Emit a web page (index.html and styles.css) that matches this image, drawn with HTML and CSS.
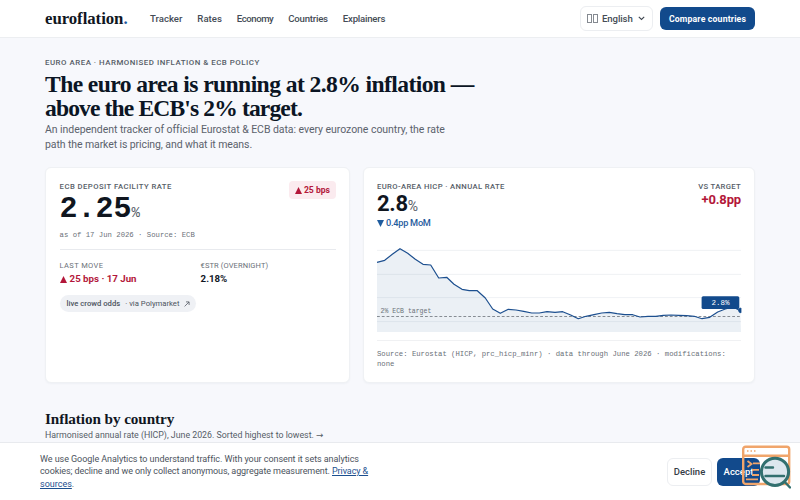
FILE: index.html
```
<!DOCTYPE html>
<html lang="en">
<head>
    <meta charset="UTF-8">
    <meta name="viewport" content="width=device-width, initial-scale=1.0">
    <title>euroflation.</title>
    <link rel="stylesheet" href="styles.css">
</head>
<body>

<header class="topbar">
    <a class="logo">euroflation<span>.</span></a>
    <nav class="nav">
        <a class="n1">Tracker</a>
        <a class="n2">Rates</a>
        <a class="n3">Economy</a>
        <a class="n4">Countries</a>
        <a class="n5">Explainers</a>
    </nav>
    <button class="lang">
        <span class="flag"></span><span class="flag"></span>
        <span class="lang-name">English</span>
        <svg width="7" height="5" viewBox="0 0 7 5"><path d="M0.8 0.8L3.5 3.5L6.2 0.8" fill="none" stroke="#3f4650" stroke-width="1.1"/></svg>
    </button>
    <button class="compare">Compare countries</button>
</header>

<main>
    <p class="eyebrow">EURO AREA · HARMONISED INFLATION &amp; ECB POLICY</p>
    <h1><span class="line1">The euro area is running at 2.8% inflation —</span><br><span class="line2">above the ECB's 2% target.</span></h1>
    <p class="lead">An independent tracker of official Eurostat &amp; ECB data: every eurozone country, the rate<br><span class="lead2">path the market is pricing, and what it means.</span></p>

    <div class="cards">
        <section class="card rate">
            <div class="card-head">
                <h3 class="label">ECB DEPOSIT FACILITY RATE</h3>
                <span class="badge"><svg width="7" height="7" viewBox="0 0 7 7"><path d="M3.5 0L7 7H0z" fill="#b3173a"/></svg>25 bps</span>
            </div>
            <div class="big-rate">2.25<span>%</span></div>
            <p class="mono">as of 17 Jun 2026 · Source: ECB</p>
            <div class="stats">
                <div>
                    <div class="stat-label">LAST MOVE</div>
                    <div class="stat up"><svg width="7" height="7" viewBox="0 0 7 7"><path d="M3.5 0L7 7H0z" fill="#b3173a"/></svg>25 bps · 17 Jun</div>
                </div>
                <div>
                    <div class="stat-label estr">€STR (OVERNIGHT)</div>
                    <div class="stat">2.18%</div>
                </div>
            </div>
            <div class="odds"><b>live crowd odds</b><span>· via Polymarket</span><svg width="6" height="6" viewBox="0 0 6 6"><path d="M0.6 5.4L5 1M2 0.9H5.1V4" fill="none" stroke="#555c66" stroke-width="0.8"/></svg></div>
        </section>

        <section class="card hicp">
            <div class="card-head">
                <div>
                    <h3 class="label hicp-label">EURO-AREA HICP · ANNUAL RATE</h3>
                    <div class="big-hicp">2.8<span>%</span></div>
                    <div class="mom"><svg width="7" height="7" viewBox="0 0 7 7"><path d="M0 0H7L3.5 7z" fill="#1f5c9e"/></svg>0.4pp MoM</div>
                </div>
                <div class="target">
                    <h3 class="label target-label">VS TARGET</h3>
                    <div class="diff">+0.8pp</div>
                </div>
            </div>
            <svg class="chart" width="364" height="92" viewBox="0 0 364 92">
                <g stroke="#ebedf1" stroke-width="0.8">
                    <path d="M0 10.4H364M0 34.4H364M0 57.6H364M0 81.6H364"/>
                </g>
                <path fill="#1c4f8f" fill-opacity="0.085" d="M0 22.3L7.7 20.3L15.3 14.3L23 8.7L30.7 13.3L38.3 19.3L46 24.3L53.7 25L61.7 38L69.7 37.3L77 44.3L85 49.3L92.3 50.7H100.3L108.3 58L115.7 69L123.3 73.3L131.3 69.3L139 70L146.7 71.3L154.7 73H162.3L170 71.7L178 72.3L185.7 71.7L193.7 75L201.3 78.7L209 76.3L217 74.7L224.7 73L232.3 72.3L240 73.7L247.7 74.7H255.7L263 77L271 76.3H278.7L286.3 75.3L294 75L301.7 75.3L309.7 75.7L317.3 76.3L325 78.7L332.7 77.3L340.7 72L348.3 69L356 67L363.3 70.7L364 92H0z"/>
                <path d="M0 76.5H364" stroke="#7a8088" stroke-width="0.9" stroke-dasharray="2.8 2"/>
                <path fill="none" stroke="#1c4f8f" stroke-width="1.2" stroke-linejoin="round" d="M0 22.3L7.7 20.3L15.3 14.3L23 8.7L30.7 13.3L38.3 19.3L46 24.3L53.7 25L61.7 38L69.7 37.3L77 44.3L85 49.3L92.3 50.7H100.3L108.3 58L115.7 69L123.3 73.3L131.3 69.3L139 70L146.7 71.3L154.7 73H162.3L170 71.7L178 72.3L185.7 71.7L193.7 75L201.3 78.7L209 76.3L217 74.7L224.7 73L232.3 72.3L240 73.7L247.7 74.7H255.7L263 77L271 76.3H278.7L286.3 75.3L294 75L301.7 75.3L309.7 75.7L317.3 76.3L325 78.7L332.7 77.3L340.7 72L348.3 69L356 67L363.3 70.7"/>
                <path d="M364 68A2.3 2.3 0 0 0 364 72.8z" fill="#124a8c" stroke="#124a8c" stroke-width="0.8"/>
                <rect x="324.6" y="56.2" width="37.7" height="12.8" rx="1.6" fill="#124a8c"/>
                <text class="tip" x="334.6" y="65.3">2.8%</text>
                <text class="target-text" x="3.6" y="73.3">2% ECB target</text>
            </svg>
            <p class="mono source">Source: Eurostat (HICP, prc_hicp_minr) · data through June 2026 · modifications:<br>none</p>
        </section>
    </div>

    <h2>Inflation by country</h2>
    <p class="sub">Harmonised annual rate (HICP), June 2026. Sorted highest to lowest. <span>→</span></p>
</main>

<div class="consent">
    <p>
        <span class="c1">We use Google Analytics to understand traffic. With your consent it sets analytics</span><br>
        <span class="c2">cookies; decline and we only collect anonymous, aggregate measurement. <a>Privacy &amp;</a></span><br>
        <a>sources</a>.
    </p>
    <button class="decline">Decline</button>
    <button class="accept">Accept</button>
    <svg class="inspector" width="50" height="44" viewBox="0 0 50 44">
        <g fill="none" stroke="#f0a56b" stroke-width="2.4">
            <rect x="2.2" y="1.7" width="46" height="37.3" rx="2.5"/>
            <path d="M2.2 10.8H48"/>
            <path d="M6.5 16L10.5 19L6.5 22M12 18.3H19M11 24.8H18M11 30H18M5 34.3H17" stroke-width="1.8"/>
        </g>
        <path d="M6 6H7.5M9.5 6H11M13 6H14.5" stroke="#f0a56b" stroke-width="1.4"/>
        <circle cx="34" cy="26.8" r="13.6" fill="#dce7ee" stroke="#32706f" stroke-width="3"/>
        <path d="M24.5 22.5H32M24.5 31H43M43.8 37L49 42.5" stroke="#32706f" stroke-width="2.4" stroke-linecap="round"/>
    </svg>
</div>

</body>
</html>
```
FILE: styles.css
```
* { box-sizing: border-box; }
body {
    font-family: Roboto, "Liberation Sans", sans-serif;
    background: #f7f8fc;
    color: #10161f;
    margin: 0;
    height: 500px;
    overflow: hidden;
}
h1, h2, h3, p { margin: 0; }
button {
    font-family: inherit;
    padding: 0;
    cursor: pointer;
}
.topbar {
    display: flex;
    align-items: center;
    height: 38px;
    padding: 0 45px;
    background: #fff;
    border-bottom: 1px solid #eceef1;
}
.logo, h1, h2 {
    font-family: "Liberation Serif", serif;
    font-weight: 700;
    white-space: nowrap;
}
.logo {
    width: 105px;
    font-size: 16.8px;
    letter-spacing: -0.05px;
}
.logo span { color: #1c5aa0; }
.nav {
    display: flex;
    gap: 15px;
    flex: 1;
    font-size: 9.6px;
    font-weight: 500;
    color: #454c56;
}
.n3 { letter-spacing: -0.45px; }
.n4, .n5 { letter-spacing: -0.22px; }
.lang {
    display: flex;
    align-items: center;
    width: 73px;
    height: 25px;
    margin-right: 7px;
    padding-left: 6px;
    background: #fff;
    border: 1px solid #eceef1;
    border-radius: 6px;
    font-size: 9.6px;
    font-weight: 500;
    color: #454c56;
}
.flag {
    width: 5px;
    height: 9px;
    margin-right: 1px;
    border: 1px solid #858a91;
}
.lang-name {
    margin: 0 5px 0 3px;
    letter-spacing: -0.1px;
}
.compare {
    width: 95px;
    height: 23px;
    background: #124a8c;
    color: #fff;
    border: none;
    border-radius: 6px;
    font-size: 8.7px;
    font-weight: 700;
    letter-spacing: 0.17px;
}
main { padding: 20px 45px 0; }
.eyebrow {
    height: 14px;
    line-height: 10px;
    font-size: 7.9px;
    font-weight: 500;
    letter-spacing: 0.5px;
    color: #565d67;
}
h1 {
    font-size: 23.6px;
    line-height: 24px;
    color: #0b1524;
}
.line1 { letter-spacing: -0.59px; }
.line2 { letter-spacing: -0.88px; }
.lead {
    margin-top: 2px;
    font-size: 10.5px;
    line-height: 15px;
    letter-spacing: -0.05px;
    white-space: nowrap;
    color: #5b626c;
}
.lead2 { letter-spacing: -0.1px; }
.cards {
    display: grid;
    grid-template-columns: 305px 392px;
    gap: 13px;
    height: 216px;
    margin-top: 15px;
}
.card {
    padding: 14px 13px 0;
    background: #fff;
    border: 1px solid #eff1f4;
    border-radius: 6px;
    box-shadow: 0 1px 2px rgba(20, 40, 80, 0.04);
}
.card-head {
    display: flex;
    justify-content: space-between;
}
.label {
    font-size: 7.7px;
    line-height: 9px;
    font-weight: 500;
    letter-spacing: 0.46px;
    color: #565d67;
}
.hicp-label { letter-spacing: 0.36px; }
.target-label { letter-spacing: 0.3px; }
.rate { padding-left: 13.6px; }
.rate .card-head { height: 11px; }
.badge {
    display: flex;
    align-items: center;
    gap: 2px;
    height: 18px;
    margin-top: -1px;
    padding: 0 6px;
    background: #fbebef;
    border-radius: 4px;
    font-size: 8.6px;
    font-weight: 700;
    color: #b3173a;
}
.big-rate {
    height: 32px;
    font-family: "Liberation Mono", monospace;
    font-size: 30px;
    line-height: 32px;
    font-weight: 700;
}
.big-rate span {
    font-size: 14px;
    font-weight: 400;
    color: #565d67;
}
.mono {
    margin-top: 5px;
    font-family: "Liberation Mono", monospace;
    font-size: 7.28px;
    line-height: 10px;
    white-space: nowrap;
    color: #6a7078;
}
.stats {
    display: grid;
    grid-template-columns: 141px 1fr;
    margin-top: 9px;
    padding-top: 11px;
    border-top: 1px solid #e8eaee;
}
.stat-label {
    font-size: 7.5px;
    line-height: 9px;
    letter-spacing: 0.38px;
    color: #6a7078;
}
.estr { letter-spacing: 0.12px; }
.stat {
    display: flex;
    align-items: center;
    gap: 3px;
    margin-top: 3px;
    font-size: 9.7px;
    line-height: 12px;
    font-weight: 700;
}
.up { color: #b3173a; }
.odds {
    display: flex;
    align-items: center;
    gap: 5px;
    width: 136px;
    height: 17px;
    margin-top: 10px;
    padding-left: 7px;
    background: #eff1f5;
    border-radius: 9px;
    font-size: 7.7px;
    color: #4c535d;
}
.odds b { font-weight: 500; }
.hicp .card-head { height: 58px; }
.big-hicp {
    height: 24px;
    font-size: 22px;
    line-height: 25px;
    font-weight: 700;
    letter-spacing: -0.3px;
}
.big-hicp span {
    font-size: 14px;
    font-weight: 400;
    color: #565d67;
}
.mom {
    display: flex;
    align-items: center;
    gap: 2px;
    margin-top: 2px;
    font-size: 9.2px;
    line-height: 12px;
    font-weight: 500;
    letter-spacing: -0.25px;
    color: #1f5c9e;
}
.target { text-align: right; }
.diff {
    margin-top: 1px;
    font-size: 13px;
    line-height: 15px;
    font-weight: 700;
    letter-spacing: -0.15px;
    color: #b3173a;
}
.chart {
    display: block;
    overflow: visible;
}
.tip, .target-text { font-family: "Liberation Mono", monospace; }
.tip {
    font-size: 7.5px;
    fill: #fff;
}
.target-text {
    font-size: 6.5px;
    fill: #6a7078;
}
.source {
    margin-top: 8px;
    padding-top: 8px;
    border-top: 1px solid #f0f1f3;
}
h2 {
    margin-top: 27px;
    font-size: 15.2px;
    line-height: 18px;
    letter-spacing: -0.08px;
}
.sub {
    font-size: 8.8px;
    line-height: 13px;
    margin-top: 1px;
    white-space: nowrap;
    color: #565d67;
}
.sub span {
    font-family: "DejaVu Sans", sans-serif;
    line-height: 1;
}
.consent {
    position: absolute;
    left: 0;
    right: 0;
    bottom: 0;
    display: flex;
    align-items: center;
    height: 58px;
    padding: 0 40px;
    background: #fff;
    border-top: 1px solid #e8eaee;
}
.consent p {
    flex: 1;
    font-size: 9px;
    line-height: 12.5px;
    white-space: nowrap;
    color: #4c535d;
}
.c1 { letter-spacing: -0.06px; }
.c2 { letter-spacing: -0.09px; }
.consent a {
    color: #1c4f8f;
    text-decoration: underline;
}
.decline, .accept {
    height: 28px;
    border-radius: 6px;
    font-size: 9.5px;
    font-weight: 500;
}
.decline {
    width: 45px;
    margin-right: 5px;
    background: #fff;
    border: 1px solid #eceef1;
    color: #353c46;
}
.accept {
    width: 43px;
    background: #124a8c;
    border: none;
    color: #fff;
}
.inspector {
    position: absolute;
    left: 741px;
    top: 2px;
}
```
